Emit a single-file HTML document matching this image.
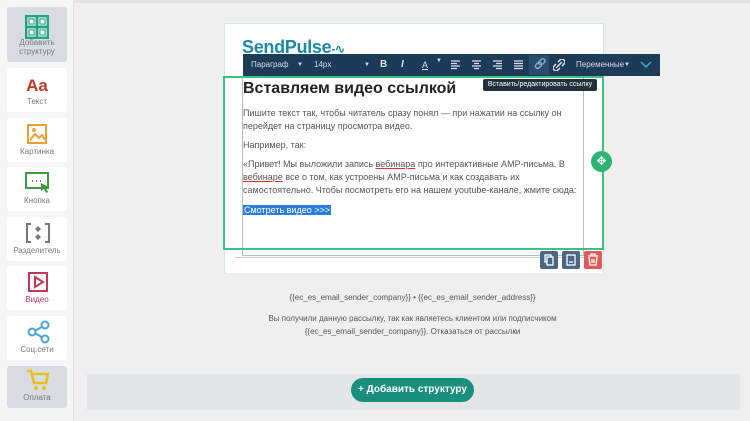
<!DOCTYPE html><html><head><meta charset="utf-8"><style>
*{margin:0;padding:0;box-sizing:border-box}
body{width:750px;height:421px;background:#efefef;font-family:"Liberation Sans",sans-serif;position:relative;overflow:hidden}
.a{position:absolute}
.sb{left:0;top:0;width:74px;height:421px;background:#f5f5f5;border-right:1px solid #e2e2e2}
.it{position:absolute;left:7px;width:60px;background:#fff;border-radius:3px;text-align:center;font-size:8px;color:#777}
.it .l{position:absolute;left:0;right:0;bottom:6px}
.tb{color:#dde;font-size:8px;top:54px;line-height:22px}
</style></head><body>
<div class="a" style="left:0;top:0;width:750px;height:3px;background:#e4e4e4"></div>
<div class="a sb"></div>
<div class="it" style="top:7px;height:55px;background:#d8dce0"><svg class="a" style="left:18px;top:8px" width="24" height="24"><g fill="none" stroke="#1aa882" stroke-width="2.5"><rect x="1" y="1" width="22" height="22"/><path d="M12 1V23M1 12H23"/></g><g fill="#fff" stroke="#1aa882"><rect x="4" y="4" width="5" height="5"/><rect x="15" y="4" width="5" height="5"/><rect x="4" y="15" width="5" height="5"/><rect x="15" y="15" width="5" height="5"/></g></svg><div class="l" style="bottom:6px;line-height:9px">Добавить<br>структуру</div></div>
<div class="it" style="top:68px;height:44px"><div class="a" style="left:0;right:0;top:8px;font-size:17px;font-weight:bold;color:#c0392b">Aa</div><div class="l">Текст</div></div>
<div class="it" style="top:118px;height:44px"><svg class="a" style="left:20px;top:6px" width="20" height="20"><rect x="1" y="1" width="18" height="18" fill="none" stroke="#f0a030" stroke-width="2"/><path d="M3 16l5-6 4 4 3-3 3 5" fill="none" stroke="#f0a030" stroke-width="2"/><circle cx="7" cy="6" r="2" fill="#f0a030"/></svg><div class="l">Картинка</div></div>
<div class="it" style="top:167px;height:44px"><svg class="a" style="left:18px;top:5px" width="26" height="22"><rect x="1" y="1" width="22" height="15" fill="none" stroke="#3d9a3d" stroke-width="2"/><path d="M7 9h1M11 9h1M15 9h1" stroke="#3d9a3d" stroke-width="2"/><path d="M16 11l8 4-3 1 2 4-2 1-2-4-3 2z" fill="#3d9a3d"/></svg><div class="l">Кнопка</div></div>
<div class="it" style="top:217px;height:44px"><svg class="a" style="left:19px;top:6px" width="24" height="20"><path d="M5 1H1V19H5M19 1H23V19H19" fill="none" stroke="#777" stroke-width="2"/><path d="M12 3l3 3-3 3-3-3zM12 11l3 3-3 3-3-3z" fill="#777"/></svg><div class="l">Разделитель</div></div>
<div class="it" style="top:266px;height:44px"><svg class="a" style="left:21px;top:6px" width="20" height="20"><rect x="1" y="1" width="18" height="18" fill="none" stroke="#c0395a" stroke-width="2"/><path d="M7 5l8 5-8 5z" fill="none" stroke="#c0395a" stroke-width="2"/></svg><div class="l" style="color:#c0395a">Видео</div></div>
<div class="it" style="top:316px;height:44px"><svg class="a" style="left:20px;top:4px" width="24" height="24"><path d="M6 12L18 5M6 12L18 19" stroke="#4aa3d8" stroke-width="2"/><g fill="#fff" stroke="#4aa3d8" stroke-width="2"><circle cx="5" cy="12" r="3.5"/><circle cx="18" cy="5" r="3.5"/><circle cx="18" cy="19" r="3.5"/></g></svg><div class="l">Соц.сети</div></div>
<div class="it" style="top:366px;height:42px;background:#d8dce0"><svg class="a" style="left:18px;top:3px" width="26" height="22"><path d="M2 2h4l3 12h12l2-9H8" fill="none" stroke="#e8c020" stroke-width="2.5"/><circle cx="11" cy="19" r="2" fill="#e8c020"/><circle cx="19" cy="19" r="2" fill="#e8c020"/></svg><div class="l">Оплата</div></div>

<div class="a" style="left:224px;top:23px;width:380px;height:250px;background:#fff;border:1px solid #cfe8ea;border-bottom:none"></div>
<div class="a" style="left:242px;top:37px;font-size:18px;font-weight:bold;color:#1a8aa6;letter-spacing:-0.3px">SendPulse<span style="font-size:12px">-∿</span></div>
<div class="a" style="left:242px;top:78px;width:342px;height:178px;border:1px solid #bbb;border-top:none"></div>
<div class="a" style="left:235px;top:257px;width:350px;height:1px;background:#ccc"></div>
<div class="a" style="left:223px;top:76px;width:381px;height:174px;border:2px solid #3fbf7f"></div>
<div class="a" style="left:243px;top:54px;width:417px;height:22px;background:#1c3b57"></div>
<div class="a" style="left:529px;top:55px;width:20px;height:20px;background:#2a4d6e"></div>
<div class="a tb" style="left:251px">Параграф</div>
<div class="a tb" style="left:297px;font-size:6px">▼</div>
<div class="a tb" style="left:314px">14px</div>
<div class="a tb" style="left:364px;font-size:6px">▼</div>
<div class="a tb" style="left:380px;font-size:10px;font-weight:bold">B</div>
<div class="a tb" style="left:401px;font-size:10px;font-weight:bold;font-style:italic">I</div>
<div class="a tb" style="left:422px;font-size:9px;text-decoration:underline">A</div>
<div class="a tb" style="left:436px;font-size:6px;top:50px">▼</div>
<svg class="a" style="left:450px;top:60px" width="80" height="10"><g stroke="#dde" stroke-width="1.3"><path d="M1 1h9M1 3.5h6M1 6h9M1 8.5h6"/><path d="M22 1h9M24 3.5h5M22 6h9M24 8.5h5"/><path d="M43 1h9M46 3.5h6M43 6h9M46 8.5h6"/><path d="M64 1h9M64 3.5h9M64 6h9M64 8.5h9"/></g></svg>
<div class="a tb" style="left:534px;font-size:10px">🔗</div>
<svg class="a" style="left:553px;top:59px" width="12" height="12"><g fill="none" stroke="#dde" stroke-width="1.5"><path d="M5 3l2-2a2.5 2.5 0 0 1 4 4l-2 2M7 9l-2 2a2.5 2.5 0 0 1-4-4l2-2M3 9l6-6"/></g></svg>
<div class="a tb" style="left:576px">Переменные</div>
<div class="a tb" style="left:624px;font-size:6px">▼</div>
<svg class="a" style="left:640px;top:61px" width="12" height="8"><path d="M1 1l5 5 5-5" fill="none" stroke="#4ac" stroke-width="1.5"/></svg>
<div class="a" style="left:483px;top:79px;width:114px;height:12px;background:#22303c;color:#fff;font-size:7px;line-height:12px;text-align:center;border-radius:2px">Вставить/редактировать ссылку</div>
<div class="a" style="left:243px;top:80px;font-size:16px;font-weight:bold;color:#222">Вставляем видео ссылкой</div>
<div class="a" style="left:243px;top:107px;width:340px;font-size:9px;line-height:13px;color:#555">Пишите текст так, чтобы читатель сразу понял — при нажатии на ссылку он перейдет на страницу просмотра видео.</div>
<div class="a" style="left:243px;top:140px;font-size:9px;color:#555">Например, так:</div>
<div class="a" style="left:243px;top:158px;width:340px;font-size:9px;line-height:13px;color:#555">«Привет! Мы выложили запись <u style="text-decoration-color:#d33">вебинара</u> про интерактивные АМР-письма. В <u style="text-decoration-color:#d33">вебинаре</u> все о том, как устроены АМР-письма и как создавать их самостоятельно. Чтобы посмотреть его на нашем youtube-канале, жмите сюда:</div>
<div class="a" style="left:243px;top:205px;font-size:9px;color:#fff;background:#2b7de0;padding:0 1px">Смотреть видео &gt;&gt;&gt;</div>
<div class="a" style="left:591px;top:151px;width:21px;height:21px;border-radius:50%;background:#2fb573;color:#fff;font-size:12px;text-align:center;line-height:21px">✥</div>
<div class="a" style="left:540px;top:251px;width:18px;height:18px;background:#4a6784;border-radius:2px"><svg width="18" height="18"><g fill="none" stroke="#fff" stroke-width="1.3"><rect x="5" y="4" width="6" height="7"/><rect x="7" y="6" width="6" height="8" fill="#4a6784"/></g></svg></div>
<div class="a" style="left:562px;top:251px;width:18px;height:18px;background:#4a6784;border-radius:2px"><svg width="18" height="18"><g fill="none" stroke="#fff" stroke-width="1.3"><rect x="5" y="4" width="8" height="10"/><path d="M7 11h4"/></g></svg></div>
<div class="a" style="left:584px;top:251px;width:18px;height:18px;background:#e05a5a;border-radius:2px"><svg width="18" height="18"><g fill="none" stroke="#fff" stroke-width="1.3"><path d="M4 5h10M7 5V3h4v2M5 6l1 8h6l1-8M8 8v4M10 8v4"/></g></svg></div>
<div class="a" style="left:0;width:825px;top:293px;text-align:center;font-size:8px;color:#555">{{ec_es_email_sender_company}} • {{ec_es_email_sender_address}}</div>
<div class="a" style="left:0;width:825px;top:312px;text-align:center;font-size:8px;line-height:13px;color:#555">Вы получили данную рассылку, так как являетесь клиентом или подписчиком<br>{{ec_es_email_sender_company}}. Отказаться от рассылки</div>
<div class="a" style="left:87px;top:374px;width:653px;height:36px;background:#e4e5e6"></div>
<div class="a" style="left:351px;top:378px;width:123px;height:24px;border-radius:12px;background:#1a8f7f;color:#fff;font-size:10px;font-weight:bold;text-align:center;line-height:24px">+ Добавить структуру</div>
</body></html>
